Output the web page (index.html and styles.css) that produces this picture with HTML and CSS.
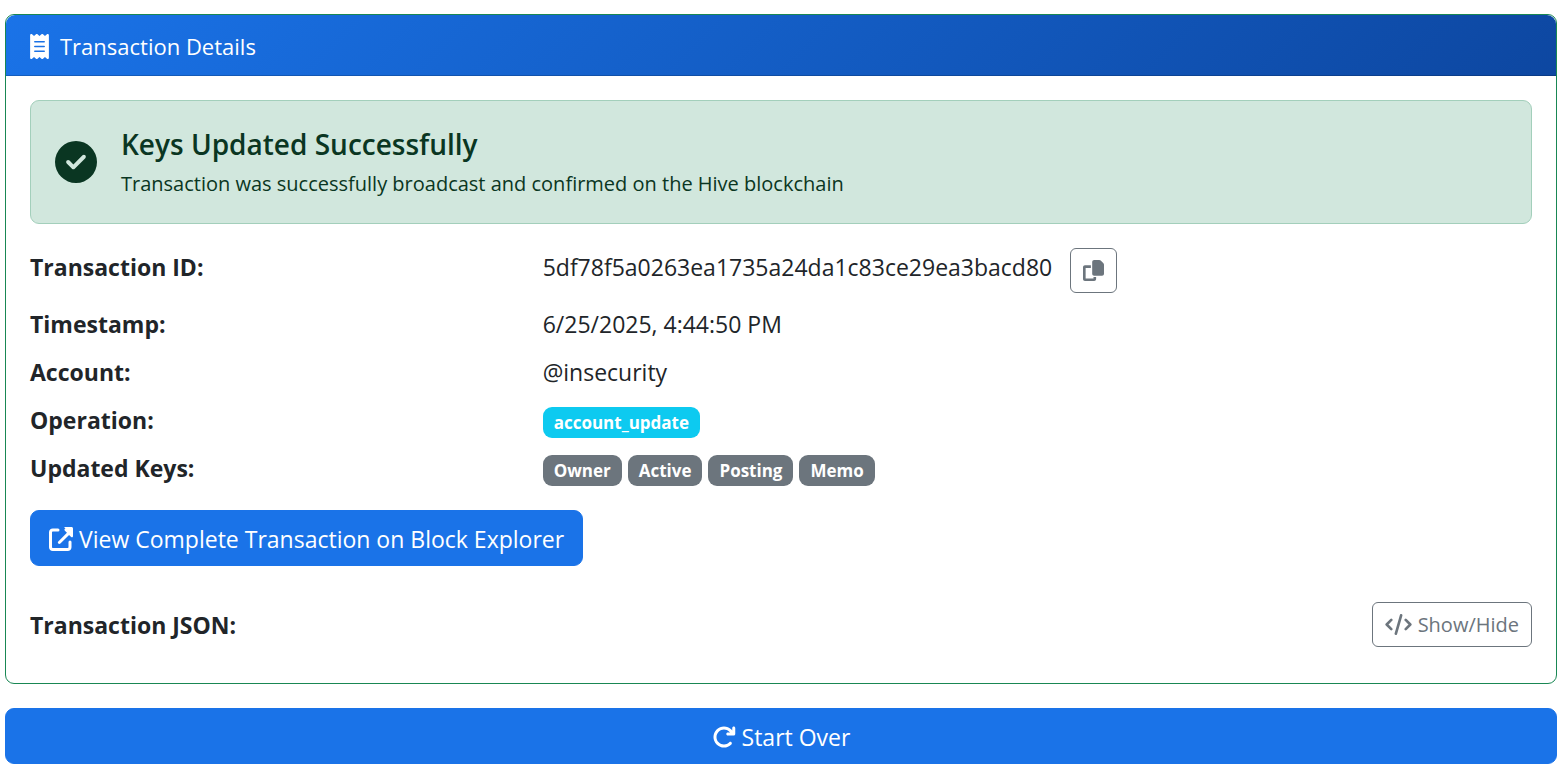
FILE: index.html
```html
<!DOCTYPE html>
<html lang="en">
<head>
    <meta charset="UTF-8">
    <meta name="viewport" content="width=device-width, initial-scale=1.0">
    <title>Transaction Details</title>
    <link rel="stylesheet" href="styles.css">
</head>
<body>
    <main class="container">
        <section class="card">
            <header class="card-header">
                <svg class="icon icon-receipt" viewBox="0 0 384 512" aria-hidden="true">
                    <path fill="currentColor" fill-rule="evenodd" d="M14 2.2C22.500-1.700 32.500-.3 39.600 5.800L80 40.400 120.400 5.800c9-7.700 22.300-7.700 31.200 0L192 40.400 232.400 5.800c9-7.700 22.300-7.700 31.200 0L304 40.400 344.400 5.800c7.100-6.100 17.100-7.500 25.600-3.600S384 14.600 384 24v464c0 9.400-5.500 17.900-14 21.800s-18.500 2.500-25.600-3.600L304 471.600l-40.400 34.600c-9 7.700-22.300 7.700-31.200 0L192 471.600l-40.400 34.600c-9 7.700-22.300 7.700-31.200 0L80 471.600 39.600 506.200c-7.100 6.100-17.100 7.500-25.600 3.600S0 497.400 0 488V24C0 14.600 5.500 6.100 14 2.200zM96 144a16 16 0 0 0 0 32h192a16 16 0 0 0 0-32zM80 352a16 16 0 0 0 16 16h192a16 16 0 0 0 0-32H96a16 16 0 0 0-16 16zM96 240a16 16 0 0 0 0 32h192a16 16 0 0 0 0-32z"/>
                </svg>
                <h1>Transaction Details</h1>
            </header>

            <div class="card-body">
                <!-- Status -->
                <div class="alert" role="alert">
                    <svg class="icon icon-check" viewBox="0 0 512 512" aria-hidden="true">
                        <path fill="currentColor" fill-rule="evenodd" d="M256 512a256 256 0 1 0 0-512 256 256 0 1 0 0 512zM369 209L241 337c-9.400 9.400-24.600 9.400-33.900 0l-64-64c-9.400-9.400-9.400-24.600 0-33.900s24.600-9.400 33.900 0l47 47L335 175c9.400-9.400 24.600-9.400 33.900 0s9.400 24.600 0 34z"/>
                    </svg>
                    <div>
                        <h2>Keys Updated Successfully</h2>
                        <p>Transaction was successfully broadcast and confirmed on the Hive blockchain</p>
                    </div>
                </div>

                <!-- Details -->
                <dl class="details">
                    <div class="row">
                        <dt>Transaction ID:</dt>
                        <dd class="tx-id">
                            <span>5df78f5a0263ea1735a24da1c83ce29ea3bacd80</span>
                            <button type="button" class="btn btn-outline btn-copy" aria-label="Copy">
                                <svg class="icon icon-copy" viewBox="0 0 512 512" aria-hidden="true">
                                    <path fill="currentColor" d="M272 0h124c14 0 26 5 36 14l66 66c9 10 14 22 14 35v221c0 27-21 48-48 48H272c-27 0-48-21-48-48V48c0-27 21-48 48-48zM48 128h144v64H64v256h192v-32h64v48c0 27-21 48-48 48H48c-27 0-48-21-48-48V176c0-27 21-48 48-48z"/>
                                </svg>
                            </button>
                        </dd>
                    </div>
                    <div class="row">
                        <dt>Timestamp:</dt>
                        <dd>6/25/2025, 4:44:50 PM</dd>
                    </div>
                    <div class="row">
                        <dt>Account:</dt>
                        <dd>@insecurity</dd>
                    </div>
                    <div class="row">
                        <dt>Operation:</dt>
                        <dd class="badges"><span class="badge badge-info">account_update</span></dd>
                    </div>
                    <div class="row">
                        <dt>Updated Keys:</dt>
                        <dd class="badges">
                            <span class="badge">Owner</span>
                            <span class="badge">Active</span>
                            <span class="badge">Posting</span>
                            <span class="badge">Memo</span>
                        </dd>
                    </div>
                </dl>

                <a href="#" class="btn btn-primary">
                    <svg class="icon icon-link" viewBox="0 0 512 512" aria-hidden="true">
                        <path fill="currentColor" d="M320 0h160c18 0 32 14 32 32v160c0 29-22 38-40 20l-44-44-185 185c-12 12-33 12-45 0s-12-33 0-45l185-185-44-44c-18-18-9-47 13-47zM80 32h112a32 32 0 0 1 0 64H80c-9 0-16 7-16 16v320c0 9 7 16 16 16h320c9 0 16-7 16-16V320a32 32 0 0 1 64 0v112c0 44-36 80-80 80H80c-44 0-80-36-80-80V112c0-44 36-80 80-80z"/>
                    </svg>
                    View Complete Transaction on Block Explorer
                </a>

                <div class="json-bar">
                    <strong>Transaction JSON:</strong>
                    <button type="button" class="btn btn-outline">
                        <svg class="icon icon-code" viewBox="0 0 640 512" aria-hidden="true">
                            <path fill="none" stroke="currentColor" stroke-width="64" stroke-linecap="round" stroke-linejoin="round" d="M384 32L256 480M144 144L32 256l112 112M496 144l112 112-112 112"/>
                        </svg>
                        Show/Hide
                    </button>
                </div>
            </div>
        </section>

        <button type="button" class="btn btn-primary btn-block">
            <svg class="icon icon-redo" viewBox="0 0 512 512" aria-hidden="true">
                <path fill="currentColor" d="M386.300 160H336c-17.700 0-32 14.300-32 32s14.300 32 32 32H464c17.700 0 32-14.300 32-32V64c0-17.700-14.300-32-32-32s-32 14.300-32 32v51.200L414.400 97.600c-87.500-87.500-229.300-87.500-316.800 0s-87.500 229.300 0 316.800s229.300 87.500 316.800 0c12.500-12.500 12.500-32.800 0-45.300s-32.800-12.500-45.300 0c-62.500 62.500-163.800 62.500-226.300 0s-62.500-163.800 0-226.300s163.800-62.500 226.300 0L386.300 160z"/>
            </svg>
            Start Over
        </button>
    </main>
</body>
</html>
```

FILE: styles.css
```css
* {
    margin: 0;
    padding: 0;
    box-sizing: border-box;
}

body {
    font-family: 'Segoe UI', 'Open Sans', 'Noto Sans', sans-serif;
    font-size: 23px;
    line-height: 38px;
    color: #212529;
    background: #fff;
}

.container {
    padding: 14px 9px 12px 5px;
}

.card {
    border: 1px solid #198754;
    border-radius: 9px;
    margin-bottom: 24px;
}

.card-header {
    display: flex;
    align-items: center;
    gap: 11px;
    padding: 12px 24px 10px;
    color: #fff;
    background: linear-gradient(135deg, #1a73e8, #0d47a1);
    border-bottom: 1px solid rgba(0, 0, 0, 0.18);
    border-radius: 9px 9px 0 0;
}

.card-header h1 {
    font-size: 22px;
    font-weight: 400;
}

.card-body {
    padding: 24px;
}

.icon {
    flex: none;
    height: 24px;
}

.icon-receipt {
    width: 19px;
    height: 25px;
}

.icon-check {
    width: 42px;
    height: 42px;
}

.icon-link {
    width: 24px;
}

.icon-copy {
    width: 21px;
    height: 21px;
}

.icon-code {
    width: 27px;
    height: 21px;
}

.icon-redo {
    width: 24px;
}

/* Status message */
.alert {
    display: flex;
    align-items: center;
    gap: 24px;
    padding: 24px;
    margin-bottom: 24px;
    color: #0a3622;
    background: #d1e7dd;
    border: 1px solid #a3cfbb;
    border-radius: 9px;
}

.alert h2 {
    margin-bottom: 6px;
    font-size: 28px;
    font-weight: 600;
    line-height: 38px;
}

.alert p {
    font-size: 20px;
    line-height: 30px;
}

/* Detail rows */
.details {
    margin-bottom: 23px;
}

.row {
    display: grid;
    grid-template-columns: 1fr 2fr;
    gap: 18px;
    margin-bottom: 10px;
}

.row dt,
.json-bar strong {
    font-weight: 700;
}

.tx-id {
    display: flex;
    align-items: flex-start;
    gap: 18px;
    padding-bottom: 2px;
}

.badges {
    display: flex;
    align-items: flex-start;
    gap: 6px;
    padding-top: 6px;
}

.badge {
    padding: 6px 11px;
    font-size: 17px;
    font-weight: 700;
    line-height: 19px;
    color: #fff;
    background: #6c757d;
    border-radius: 9px;
}

.badge-info {
    background: #0dcaf0;
}

/* Buttons */
.btn {
    display: inline-flex;
    align-items: center;
    justify-content: center;
    gap: 6px;
    font-family: inherit;
    border: 1px solid transparent;
    border-radius: 9px;
    text-decoration: none;
    cursor: pointer;
}

.btn-primary {
    padding: 10px 18px 8px;
    font-size: 23px;
    line-height: 36px;
    color: #fff;
    background: #1a73e8;
    border-color: #1a73e8;
}

.btn-primary:hover {
    background: #0d47a1;
}

.btn-outline {
    padding: 6px 12px;
    font-size: 20px;
    line-height: 31px;
    color: #6c757d;
    background: transparent;
    border-color: #6c757d;
    border-radius: 6px;
}

.btn-outline:hover {
    color: #fff;
    background: #6c757d;
}

.btn-copy {
    min-height: 45px;
}

.btn-block {
    width: 100%;
}

.json-bar {
    display: flex;
    align-items: center;
    justify-content: space-between;
    margin-top: 36px;
    margin-bottom: 12px;
}
```
